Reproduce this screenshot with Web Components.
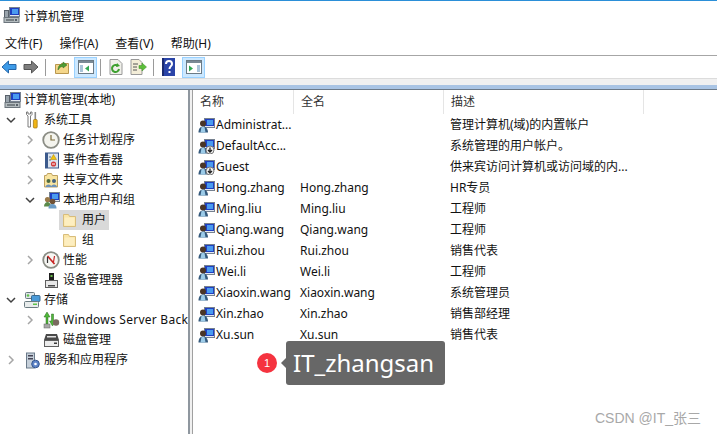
<!DOCTYPE html>
<html>
<head>
<meta charset="utf-8">
<style>
  html, body { margin: 0; padding: 0; background: #fff; }
  body { width: 717px; height: 434px; overflow: hidden; font-family: "Noto Sans", "Noto Sans CJK SC", sans-serif; color: #111; }
</style>
</head>
<body>
<script>
// shared icon drawings
const monitor = (x, y) => `<rect x="${x + .5}" y="${y + .5}" width="10" height="9" fill="#e4e8f0" stroke="#76818f"/><rect x="${x + 1}" y="${y + 1}" width="9" height="7" fill="#1f3fc0"/><rect x="${x + 3}" y="${y + 2}" width="6" height="5" fill="#4a9bf0"/>`;
const person = `<circle cx="5" cy="6.500" r="3" fill="#4a3526"/><path d="M.5 15.500c0-4 2-6 4.500-6s5 2 5 6z" fill="#34597c"/><path d="M3.500 10l3 0 1 5.500h-5z" fill="#9ccbe8"/>`;
const ICONS = {
  computer: `<svg width="17" height="17" viewBox="0 0 17 17">${monitor(6, 0)}<rect x="1.500" y="3.500" width="4" height="8" fill="#9aa4ac" stroke="#59626b"/><rect x="1" y="10.500" width="15" height="5" fill="#b4bcbf" stroke="#6b747c"/><rect x="3" y="12.500" width="8" height="1" fill="#3b4248"/><rect x="12" y="12" width="2" height="2" fill="#59626b"/></svg>`,
  user: `<svg width="17" height="16" viewBox="0 0 17 16">${monitor(6, 1)}${person}</svg>`,
  userDown: `<svg width="17" height="16" viewBox="0 0 17 16">${monitor(6, 1)}${person}<circle cx="12" cy="12" r="4" fill="#f0f0f0" stroke="#7a7a7a"/><path d="M12 9.500v4M10 12l2 2 2-2" stroke="#222" stroke-width="1.300" fill="none"/></svg>`,
  folder: `<svg width="16" height="15" viewBox="0 0 16 15"><path d="M1.500 13.500V1.500h5l1 2h6v10z" fill="#fbe6a6" stroke="#d8bd7c"/><rect x="2.500" y="4.500" width="10" height="8" fill="#fdeec0"/></svg>`,
  tools: `<svg width="14" height="18" viewBox="0 0 14 18"><path d="M1.500 1v2.500L3 5v11h2.500V5L7 3.500V1L5.500 1v2H3V1z" fill="#fff" stroke="#6e6e6e" stroke-width=".9"/><rect x="9.500" y="1" width="1.600" height="8" fill="#8a8a8a"/><rect x="8.400" y="8.500" width="3.800" height="8.500" rx="1" fill="#efb416" stroke="#9c7210" stroke-width=".7"/></svg>`,
  clock: `<svg width="18" height="18" viewBox="0 0 18 18"><circle cx="9" cy="9" r="7.800" fill="#f4f4ee" stroke="#8b8d85" stroke-width="1.800"/><path d="M9 4v5h4" fill="none" stroke="#7a6a3a" stroke-width="1.200"/></svg>`,
  log: `<svg width="15" height="17" viewBox="0 0 15 17"><rect x="1.500" y="1" width="13" height="15" fill="#dbe3ee" stroke="#3c5a8c"/><rect x="1" y="1" width="3" height="15" fill="#3c5a8c"/><path d="M5 5h2M5 8h2" stroke="#56708f"/><path d="M9.500 2.500l3 5h-6z" fill="#f1c40f" stroke="#a98300" stroke-width=".5"/><circle cx="9.500" cy="12" r="2.600" fill="#d23b3b"/><path d="M8 12h3" stroke="#fff"/></svg>`,
  share: `<svg width="16" height="16" viewBox="0 0 16 16"><path d="M1.500 15V3.500h2l1-2h4l1 2h5V15z" fill="#f8e4a0" stroke="#bda060"/><circle cx="5.500" cy="9" r="2" fill="#4e6a40"/><circle cx="11" cy="9" r="2" fill="#44617e"/><path d="M2.500 15c0-3.500 6-3.500 6 0zM8 15c0-3.500 6-3.500 6 0z" fill="#6f93b8"/></svg>`,
  group: `<svg width="17" height="17" viewBox="0 0 17 17">${monitor(6, 0)}<circle cx="4.500" cy="7.500" r="2.600" fill="#9a7a4a"/><path d="M1 14.500c0-3 2-4.500 3.500-4.500S8 11.500 8 14.500z" fill="#5b8a4a"/><circle cx="9.500" cy="9.500" r="2.800" fill="#6f5236"/><path d="M5.500 16.500c0-3.500 2-4.500 4-4.500s4 1 4 4.500z" fill="#6b9bc4"/></svg>`,
  perf: `<svg width="18" height="18" viewBox="0 0 18 18"><circle cx="9" cy="9" r="7.800" fill="#f6f6f2" stroke="#8b8d85" stroke-width="1.800"/><path d="M5.500 5l7 8" stroke="#c62222" stroke-width="1.600" fill="none"/><path d="M12.500 5l-1 6" stroke="#c62222" stroke-width="1.200" fill="none"/><path d="M5.500 6v6" stroke="#333" stroke-width="1.200"/></svg>`,
  device: `<svg width="17" height="17" viewBox="0 0 17 17"><rect x="6" y="1" width="5" height="7" fill="#1e1e1e"/><rect x="7.500" y="3" width="2" height="2" fill="#6bbf4a"/><rect x="2.500" y="8.500" width="12" height="7" fill="#e8e8e8" stroke="#5e5e5e"/><rect x="5" y="13" width="7" height="1.500" fill="#4a4a4a"/></svg>`,
  storage: `<svg width="18" height="18" viewBox="0 0 18 18"><rect x="2.500" y="1.500" width="9" height="6" rx="1" fill="#dfe5e8" stroke="#6a7a80"/><rect x="8.500" y="4.500" width="8.500" height="6" rx="1" fill="#4a9ad8" stroke="#3a6a90"/><circle cx="5" cy="4.500" r="1.300" fill="#5ec24a"/><rect x="1.500" y="10.500" width="14" height="6" rx="1" fill="#e8ecec" stroke="#6a7a80"/><rect x="10" y="12.500" width="4" height="1.500" fill="#5ec24a"/></svg>`,
  backup: `<svg width="18" height="18" viewBox="0 0 18 18"><path d="M5 1l3 5H6v7H4V6H2z" fill="#4fb83a" stroke="#2d6a20" stroke-width=".5"/><path d="M10.500 15l-3-5h2V3h2v7h2z" fill="#4fb83a" stroke="#2d6a20" stroke-width=".5"/><circle cx="14" cy="11.500" r="3.200" fill="#7a6a60"/><rect x="2" y="13" width="6" height="4" fill="#a8a8a8" stroke="#666" stroke-width=".5"/></svg>`,
  disk: `<svg width="17" height="16" viewBox="0 0 17 16"><path d="M3 2h11l2 6H1z" fill="#4a4a4a"/><rect x="4" y="4" width="9" height="1.500" fill="#e2e2e2"/><rect x="1.500" y="8.500" width="14" height="6" fill="#ececec" stroke="#5e5e5e"/><rect x="11" y="10.500" width="3" height="1.500" fill="#3a3a3a"/></svg>`,
  services: `<svg width="15" height="17" viewBox="0 0 15 17"><rect x="1.500" y="1" width="8" height="15" fill="#c6d0da" stroke="#6a7a8a"/><rect x="3" y="3" width="5" height="1.500" fill="#445"/><rect x="3" y="6" width="5" height="1.500" fill="#445"/><circle cx="10.500" cy="12" r="3.800" fill="#5f85c8" stroke="#33558f"/><circle cx="10.500" cy="12" r="1.300" fill="#fff"/></svg>`
};

class MmcWindow extends HTMLElement {
  constructor() {
    super();
    this.attachShadow({ mode: "open" });
    this.shadowRoot.innerHTML = `
      <style>
        :host { display: flex; flex-direction: column; width: 717px; height: 434px; position: relative; background: #fff; }
        .panes { flex: 1; display: flex; min-height: 0; }
        ::slotted(tree-pane) { width: 188px; flex: none; }
        .split { width: 5px; flex: none; background: #f0f0f0; border-left: 2px solid #8f979f; border-right: 1px solid #a0a0a0; box-sizing: border-box; }
        ::slotted(user-list) { flex: 1; }
      </style>
      <slot name="top"></slot>
      <div class="panes">
        <slot name="tree"></slot>
        <div class="split"></div>
        <slot name="list"></slot>
      </div>
      <slot></slot>
    `;
  }
}

class TitleBar extends HTMLElement {
  constructor() {
    super();
    this.attachShadow({ mode: "open" });
    this.shadowRoot.innerHTML = `
      <style>
        :host { display: flex; align-items: center; gap: 4px; height: 30px; padding: 0 0 0 3px; border-top: 1px solid #2b8fd8; box-sizing: border-box; font-size: 12px; color: #111; }
      </style>
      ${ICONS.computer}
      <span><slot></slot></span>
    `;
  }
}

class MenuBar extends HTMLElement {
  constructor() {
    super();
    this.attachShadow({ mode: "open" });
    this.shadowRoot.innerHTML = `
      <style>
        :host { display: flex; align-items: center; gap: 17px; height: 24px; padding: 1px 0 0 5px; border-bottom: 1px solid #a6a6a6; font-size: 12px; color: #111; }
      </style>
      <slot></slot>
    `;
  }
}

class ToolBar extends HTMLElement {
  constructor() {
    super();
    this.attachShadow({ mode: "open" });
    this.shadowRoot.innerHTML = `
      <style>
        :host { display: flex; align-items: center; height: 22px; background: #fff; }
        .b { width: 23px; height: 21px; display: flex; flex: none; align-items: center; justify-content: center; box-sizing: border-box; }
        .on { background: #cce8ff; border: 1px solid #99d1ff; }
        .sep { width: 1px; height: 17px; flex: none; background: #9a9a9a; }
      </style>
      <div class="b" style="width:17px"><svg width="16" height="14" viewBox="0 0 16 14"><path d="M7.500 1L1 7l6.500 6V9.500H15v-5H7.500z" fill="#3d9be8" stroke="#2465a8"/></svg></div>
      <div class="b" style="margin-left:5px;width:18px"><svg width="16" height="14" viewBox="0 0 16 14"><path d="M8.500 1L15 7l-6.500 6V9.500H1v-5h7.500z" fill="#7e7e7e" stroke="#555"/></svg></div>
      <div class="sep" style="margin:0 7px 0 5px"></div>
      <div class="b" style="width:18px;margin-right:3px"><svg width="16" height="16" viewBox="0 0 16 16"><path d="M1.500 5.500h5l1-1h7v10h-13z" fill="#f4d68a" stroke="#b9974f"/><path d="M4 11c0-4 2-6 5-6V3l4 3-4 3V7.500c-2 0-3.500 1-5 3.500z" fill="#4f9d33" stroke="#2d6a20" stroke-width=".5"/></svg></div>
      <div class="b on"><svg width="16" height="14" viewBox="0 0 16 14"><rect x=".5" y=".5" width="15" height="13" fill="#fff" stroke="#6b7a85"/><rect x="1" y="1" width="14" height="2" fill="#7a8a95"/><rect x="2" y="5" width="3" height="7" fill="#a9c4d8"/><path d="M11 5.500v6L7 8.500z" fill="#32a852"/></svg></div>
      <div class="sep" style="margin:0 6px 0 3px"></div>
      <div class="b" style="width:18px;margin-right:3px"><svg width="14" height="16" viewBox="0 0 14 16"><path d="M1 .5h8l4 4v11H1z" fill="#f0f0ea" stroke="#999"/><path d="M10 10a3.500 3.500 0 1 1-1-3" fill="none" stroke="#3da02f" stroke-width="2"/><path d="M8 4l3 3-4 1z" fill="#3da02f"/></svg></div>
      <div class="b" style="width:20px"><svg width="17" height="16" viewBox="0 0 17 16"><path d="M1 .5h8l3 3v12H1z" fill="#f3edd8" stroke="#999"/><path d="M3 5h5M3 8h4M3 11h4" stroke="#555"/><path d="M9 6.500h3V4l4.500 4-4.500 4V9.500H9z" fill="#5cbf3a" stroke="#3a8a24" stroke-width=".5"/></svg></div>
      <div class="sep" style="margin:0 8px 0 5px"></div>
      <div class="b" style="width:14px;margin-right:6px"><svg width="14" height="18" viewBox="0 0 14 18"><rect width="13" height="18" fill="#2a44a8"/><rect width="2" height="18" fill="#1a2a70"/><path d="M4 6c0-4 6-4 6 0 0 2-2.500 2.500-2.500 5" fill="none" stroke="#fff" stroke-width="2"/><rect x="6.500" y="13" width="2" height="2" fill="#fff"/></svg></div>
      <div class="b on"><svg width="16" height="14" viewBox="0 0 16 14"><rect x=".5" y=".5" width="15" height="13" fill="#fff" stroke="#6b7a85"/><rect x="1" y="1" width="14" height="2" fill="#7a8a95"/><path d="M3 5.500v6l4-3z" fill="#32a852"/><rect x="11" y="5" width="3" height="7" fill="#a9c4d8"/></svg></div>
    `;
  }
}

class TreeItem extends HTMLElement {
  constructor() {
    super();
    this.attachShadow({ mode: "open" });
  }
  connectedCallback() {
    const depth = Number(this.getAttribute("depth") || 0);
    const arrow = this.getAttribute("arrow");
    const icon = ICONS[this.getAttribute("icon")];
    const chev = arrow === "open"
      ? `<path d="M1 3l4 4 4-4" fill="none" stroke="#404040" stroke-width="1.500"/>`
      : arrow === "closed" ? `<path d="M3 1l4 4-4 4" fill="none" stroke="#a6a6a6" stroke-width="1.500"/>` : "";
    this.shadowRoot.innerHTML = `
      <style>
        :host { display: flex; align-items: center; height: 20px; padding-left: ${depth ? depth * 19 - 13 : 1}px; font-size: 12px; white-space: nowrap; color: #111; }
        svg.c { flex: none; width: 10px; height: 10px; margin-right: 5px; ${depth ? "" : "display: none;"} }
        .i { flex: none; width: 18px; height: 18px; display: flex; align-items: center; justify-content: center; margin-right: 2px; }
        .t { padding: 0 3px 0 1px; height: 20px; line-height: 20px; }
        :host([selected]) .w { background: #d9d9d9; }
        .w { display: flex; align-items: center; height: 20px; padding-left: 2px; }
      </style>
      <svg class="c" viewBox="0 0 10 10">${chev}</svg>
      <div class="w"><div class="i">${icon}</div><span class="t"><slot></slot></span></div>
    `;
  }
}

class TreePane extends HTMLElement {
  constructor() {
    super();
    this.attachShadow({ mode: "open" });
    this.shadowRoot.innerHTML = `
      <style>
        :host { display: block; overflow: hidden; box-sizing: border-box; }
      </style>
      <slot></slot>
    `;
  }
}

class UserList extends HTMLElement {
  constructor() {
    super();
    this.attachShadow({ mode: "open" });
    this.shadowRoot.innerHTML = `
      <style>
        :host { display: block; overflow: hidden; }
        .head { display: grid; grid-template-columns: 101px 150px 200px; height: 24px; font-size: 12px; color: #333; }
        .head div { display: flex; align-items: center; padding: 0 0 2px 7px; border-right: 1px solid #e5e5e5; }
      </style>
      <div class="head"><div>名称</div><div>全名</div><div>描述</div></div>
      <slot></slot>
    `;
  }
}

class UserRow extends HTMLElement {
  constructor() {
    super();
    this.attachShadow({ mode: "open" });
  }
  connectedCallback() {
    const icon = ICONS[this.getAttribute("icon") || "user"];
    this.shadowRoot.innerHTML = `
      <style>
        :host { display: grid; grid-template-columns: 102px 150px 1fr; align-items: center; height: 21px; font-size: 12px; color: #111; white-space: nowrap; padding-left: 5px; }
        .n { display: flex; align-items: center; gap: 1px; overflow: hidden; }
        .d { padding-bottom: 2px; }
      </style>
      <div class="n">${icon}<span>${this.getAttribute("name")}</span></div>
      <div>${this.getAttribute("full") || ""}</div>
      <div class="d">${this.getAttribute("desc") || ""}</div>
    `;
  }
}

class NameTip extends HTMLElement {
  constructor() {
    super();
    this.attachShadow({ mode: "open" });
    this.shadowRoot.innerHTML = `
      <style>
        :host { position: absolute; left: 257px; top: 341px; display: flex; align-items: center; font-family: "Liberation Sans", sans-serif; }
        .dot { width: 20px; height: 20px; border-radius: 50%; background: #f5333f; color: #fff; font-size: 11px; display: flex; align-items: center; justify-content: center; margin-right: 9px; }
        .tip { position: relative; background: #676767; color: #fff; height: 44px; line-height: 43px; padding: 0 11px 0 7px; border-radius: 3px; font-size: 24px; font-family: "Noto Sans", sans-serif; }
        .tip::before { content: ""; position: absolute; left: -5px; top: 17px; border-style: solid; border-width: 5px 5px 5px 0; border-color: transparent #676767 transparent transparent; }
      </style>
      <div class="dot">1</div>
      <div class="tip"><slot></slot></div>
    `;
  }
}

class WaterMark extends HTMLElement {
  constructor() {
    super();
    this.attachShadow({ mode: "open" });
    this.shadowRoot.innerHTML = `
      <style>
        :host { position: absolute; right: 16px; bottom: 7px; font-size: 14px; color: #a8a8a8; font-family: "Liberation Sans", "Noto Sans CJK SC", sans-serif; }
      </style>
      <slot></slot>
    `;
  }
}

for (const [tag, cls] of [
  ["mmc-window", MmcWindow], ["title-bar", TitleBar], ["menu-bar", MenuBar], ["tool-bar", ToolBar],
  ["tree-pane", TreePane], ["tree-item", TreeItem], ["user-list", UserList], ["user-row", UserRow],
  ["name-tip", NameTip], ["water-mark", WaterMark]
]) customElements.define(tag, cls);

const tree = [
  [0, "", "computer", "计算机管理(本地)"],
  [1, "open", "tools", "系统工具"],
  [2, "closed", "clock", "任务计划程序"],
  [2, "closed", "log", "事件查看器"],
  [2, "closed", "share", "共享文件夹"],
  [2, "open", "group", "本地用户和组"],
  [3, "", "folder", "用户", true],
  [3, "", "folder", "组"],
  [2, "closed", "perf", "性能"],
  [2, "", "device", "设备管理器"],
  [1, "open", "storage", "存储"],
  [2, "closed", "backup", "Windows Server Back"],
  [2, "", "disk", "磁盘管理"],
  [1, "closed", "services", "服务和应用程序"]
];
const users = [
  ["Administrat...", "", "管理计算机(域)的内置帐户"],
  ["DefaultAcc...", "", "系统管理的用户帐户。", "userDown"],
  ["Guest", "", "供来宾访问计算机或访问域的内...", "userDown"],
  ["Hong.zhang", "Hong.zhang", "HR专员"],
  ["Ming.liu", "Ming.liu", "工程师"],
  ["Qiang.wang", "Qiang.wang", "工程师"],
  ["Rui.zhou", "Rui.zhou", "销售代表"],
  ["Wei.li", "Wei.li", "工程师"],
  ["Xiaoxin.wang", "Xiaoxin.wang", "系统管理员"],
  ["Xin.zhao", "Xin.zhao", "销售部经理"],
  ["Xu.sun", "Xu.sun", "销售代表"]
];

const win = document.createElement("mmc-window");
const head = document.createElement("div");
head.slot = "top";
head.innerHTML = `<title-bar>计算机管理</title-bar><menu-bar><span>文件(F)</span><span>操作(A)</span><span>查看(V)</span><span>帮助(H)</span></menu-bar><tool-bar></tool-bar><div style="height:7px;background:#f0f0f0;border-top:1px solid #dcdcdc;box-sizing:border-box"></div><div style="height:4px;background:#a9c4e4"></div><div style="height:1px;background:#6d7a88"></div>`;
win.appendChild(head);

const pane = document.createElement("tree-pane");
pane.slot = "tree";
for (const [depth, arrow, icon, text, sel] of tree) {
  const it = document.createElement("tree-item");
  it.setAttribute("depth", depth);
  it.setAttribute("arrow", arrow);
  it.setAttribute("icon", icon);
  if (sel) it.setAttribute("selected", "");
  if (text.startsWith("Windows")) it.style.letterSpacing = ".25px";
  it.textContent = text;
  pane.appendChild(it);
}
win.appendChild(pane);

const list = document.createElement("user-list");
list.slot = "list";
for (const [name, full, desc, icon] of users) {
  const r = document.createElement("user-row");
  r.setAttribute("name", name);
  r.setAttribute("full", full);
  r.setAttribute("desc", desc);
  if (icon) r.setAttribute("icon", icon);
  list.appendChild(r);
}
win.appendChild(list);

const tip = document.createElement("name-tip");
tip.textContent = "IT_zhangsan";
win.appendChild(tip);
const mark = document.createElement("water-mark");
mark.textContent = "CSDN @IT_张三";
win.appendChild(mark);
document.body.appendChild(win);
</script>
</body>
</html>
